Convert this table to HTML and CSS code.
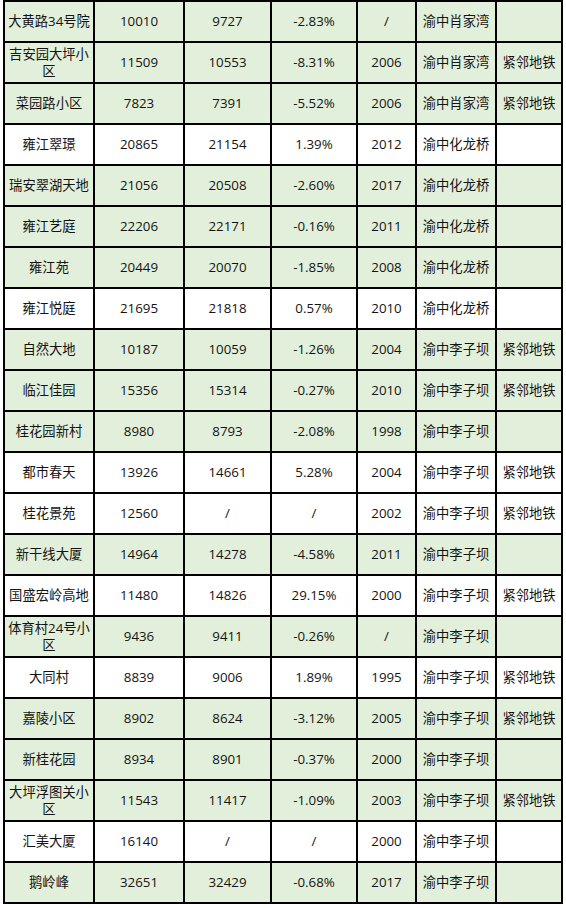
FILE: index.html
```html
<!DOCTYPE html>
<html lang="zh-CN">
<head>
<meta charset="utf-8">
<title>渝中区小区房价</title>
<link rel="stylesheet" href="styles.css">
</head>
<body>
<table class="price-table">
  <colgroup>
    <col class="c-name"><col class="c-p1"><col class="c-p2"><col class="c-pct"><col class="c-year"><col class="c-area"><col class="c-note">
  </colgroup>
  <tbody>
    <tr class="g"><td>大黄路34号院</td><td>10010</td><td>9727</td><td>-2.83%</td><td>/</td><td>渝中肖家湾</td><td></td></tr>
    <tr class="g"><td>吉安园大坪小区</td><td>11509</td><td>10553</td><td>-8.31%</td><td>2006</td><td>渝中肖家湾</td><td>紧邻地铁</td></tr>
    <tr class="g"><td>菜园路小区</td><td>7823</td><td>7391</td><td>-5.52%</td><td>2006</td><td>渝中肖家湾</td><td>紧邻地铁</td></tr>
    <tr class="w"><td>雍江翠璟</td><td>20865</td><td>21154</td><td>1.39%</td><td>2012</td><td>渝中化龙桥</td><td></td></tr>
    <tr class="g"><td>瑞安翠湖天地</td><td>21056</td><td>20508</td><td>-2.60%</td><td>2017</td><td>渝中化龙桥</td><td></td></tr>
    <tr class="g"><td>雍江艺庭</td><td>22206</td><td>22171</td><td>-0.16%</td><td>2011</td><td>渝中化龙桥</td><td></td></tr>
    <tr class="g"><td>雍江苑</td><td>20449</td><td>20070</td><td>-1.85%</td><td>2008</td><td>渝中化龙桥</td><td></td></tr>
    <tr class="w"><td>雍江悦庭</td><td>21695</td><td>21818</td><td>0.57%</td><td>2010</td><td>渝中化龙桥</td><td></td></tr>
    <tr class="g"><td>自然大地</td><td>10187</td><td>10059</td><td>-1.26%</td><td>2004</td><td>渝中李子坝</td><td>紧邻地铁</td></tr>
    <tr class="g"><td>临江佳园</td><td>15356</td><td>15314</td><td>-0.27%</td><td>2010</td><td>渝中李子坝</td><td>紧邻地铁</td></tr>
    <tr class="g"><td>桂花园新村</td><td>8980</td><td>8793</td><td>-2.08%</td><td>1998</td><td>渝中李子坝</td><td></td></tr>
    <tr class="w"><td>都市春天</td><td>13926</td><td>14661</td><td>5.28%</td><td>2004</td><td>渝中李子坝</td><td>紧邻地铁</td></tr>
    <tr class="w"><td>桂花景苑</td><td>12560</td><td>/</td><td>/</td><td>2002</td><td>渝中李子坝</td><td>紧邻地铁</td></tr>
    <tr class="g"><td>新干线大厦</td><td>14964</td><td>14278</td><td>-4.58%</td><td>2011</td><td>渝中李子坝</td><td></td></tr>
    <tr class="w"><td>国盛宏岭高地</td><td>11480</td><td>14826</td><td>29.15%</td><td>2000</td><td>渝中李子坝</td><td>紧邻地铁</td></tr>
    <tr class="g"><td>体育村24号小区</td><td>9436</td><td>9411</td><td>-0.26%</td><td>/</td><td>渝中李子坝</td><td></td></tr>
    <tr class="w"><td>大同村</td><td>8839</td><td>9006</td><td>1.89%</td><td>1995</td><td>渝中李子坝</td><td>紧邻地铁</td></tr>
    <tr class="g"><td>嘉陵小区</td><td>8902</td><td>8624</td><td>-3.12%</td><td>2005</td><td>渝中李子坝</td><td>紧邻地铁</td></tr>
    <tr class="g"><td>新桂花园</td><td>8934</td><td>8901</td><td>-0.37%</td><td>2000</td><td>渝中李子坝</td><td></td></tr>
    <tr class="g"><td>大坪浮图关小区</td><td>11543</td><td>11417</td><td>-1.09%</td><td>2003</td><td>渝中李子坝</td><td>紧邻地铁</td></tr>
    <tr class="w"><td>汇美大厦</td><td>16140</td><td>/</td><td>/</td><td>2000</td><td>渝中李子坝</td><td></td></tr>
    <tr class="g"><td>鹅岭峰</td><td>32651</td><td>32429</td><td>-0.68%</td><td>2017</td><td>渝中李子坝</td><td></td></tr>
  </tbody>
</table>
</body>
</html>
```
FILE: styles.css
```css
html, body {
  margin: 0;
  padding: 0;
  background: #ffffff;
}

.price-table {
  margin: 0 0 0 3px;
  width: 560px;
  table-layout: fixed;
  border-collapse: separate;
  border-spacing: 2px;
  background: #000000;
  font-family: "Open Sans", "Noto Sans CJK SC", sans-serif;
  font-size: 13.3px;
  color: #141414;
}

.c-name { width: 88px; }
.c-p1 { width: 88px; }
.c-p2 { width: 85px; }
.c-pct { width: 84px; }
.c-year { width: 57px; }
.c-area { width: 78px; }
.c-note { width: 64px; }

.price-table td {
  height: 39px;
  box-sizing: border-box;
  padding: 0 2px;
  text-align: center;
  vertical-align: middle;
  line-height: 17px;
}

.price-table tr.g td { background: #e2efda; }
.price-table tr.w td { background: #ffffff; }
```
